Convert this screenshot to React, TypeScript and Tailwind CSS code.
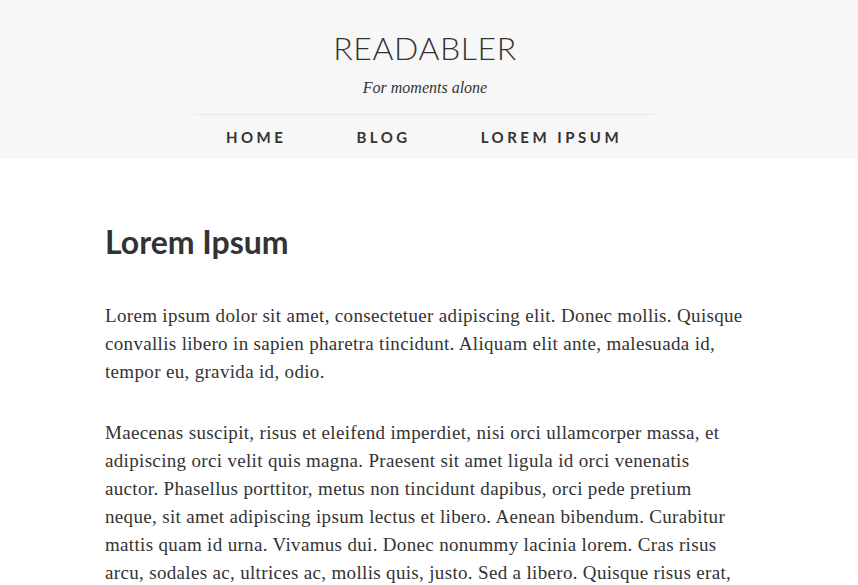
import React from "react";

const p1 = [
  "Lorem ipsum dolor sit amet, consectetuer adipiscing elit. Donec mollis. Quisque",
  "convallis libero in sapien pharetra tincidunt. Aliquam elit ante, malesuada id,",
  "tempor eu, gravida id, odio.",
];
const p2 = [
  "Maecenas suscipit, risus et eleifend imperdiet, nisi orci ullamcorper massa, et",
  "adipiscing orci velit quis magna. Praesent sit amet ligula id orci venenatis",
  "auctor. Phasellus porttitor, metus non tincidunt dapibus, orci pede pretium",
  "neque, sit amet adipiscing ipsum lectus et libero. Aenean bibendum. Curabitur",
  "mattis quam id urna. Vivamus dui. Donec nonummy lacinia lorem. Cras risus",
  "arcu, sodales ac, ultrices ac, mollis quis, justo. Sed a libero. Quisque risus erat,",
];

export default function App() {
  return (
    <div className="h-[585px] overflow-hidden bg-white text-[#333]">
      <header className="bg-[#f7f7f7] pt-[24px] pr-[8px]">
        <h1
          className="text-center text-[32px] leading-[48px] font-light tracking-[0.6px] text-[#333]"
          style={{ fontFamily: "Lato, 'Liberation Sans', sans-serif" }}
        >
          READABLER
        </h1>
        <p
          className="mt-[4px] text-center text-[16px] leading-[24px] italic text-[#333]"
          style={{ fontFamily: "'Liberation Serif', 'DejaVu Serif', serif" }}
        >
          For moments alone
        </p>
        <nav className="mx-auto mt-[14px] w-[460px] border-t border-[#e8e8e8]">
          <ul
            className="flex h-[44px] items-center justify-center gap-[70px] pr-[2px] text-[15px] font-bold tracking-[3.5px] text-[#333]"
            style={{ fontFamily: "Lato, 'Liberation Sans', sans-serif" }}
          >
            <li>HOME</li>
            <li>BLOG</li>
            <li>LOREM IPSUM</li>
          </ul>
        </nav>
      </header>
      <main className="mx-auto w-[648px] pt-[63px]">
        <h2
          className="text-[32px] leading-[40px] font-bold text-[#333]"
          style={{ fontFamily: "Lato, 'Liberation Sans', sans-serif" }}
        >
          Lorem Ipsum
        </h2>
        <div
          className="mt-[40px] text-[19px] leading-[28px] tracking-[0.33px] text-[#333]"
          style={{ fontFamily: "'Liberation Serif', 'DejaVu Serif', serif" }}
        >
          <p className="mb-[33px]">
            {p1.map((l, i) => (
              <span key={i} className="block whitespace-nowrap">
                {l}
              </span>
            ))}
          </p>
          <p>
            {p2.map((l, i) => (
              <span key={i} className="block whitespace-nowrap">
                {l}
              </span>
            ))}
          </p>
        </div>
      </main>
    </div>
  );
}
